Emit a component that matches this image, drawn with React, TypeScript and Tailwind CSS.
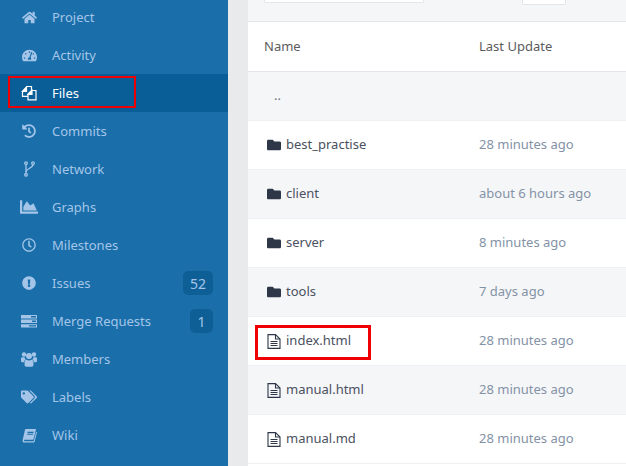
import { ReactNode } from "react";
import {
  FaHome,
  FaTachometerAlt,
  FaHistory,
  FaChartArea,
  FaRegClock,
  FaExclamationCircle,
  FaTags,
  FaFolder,
} from "react-icons/fa";

function FilesIcon() {
  return (
    <svg viewBox="0 0 16 16" className="w-[16px] h-[16px]" fill="none" stroke="currentColor" strokeWidth="1.2">
      <path d="M7 11.300H1.500V6.500L6 1.500h4.500V5" />
      <path d="M1.500 6.500H5.500V2z" fill="currentColor" />
      <path d="M7 14.900H15V5.500H10.500L7 9z" />
      <path d="M7 9.500h4V5.500z" fill="currentColor" />
    </svg>
  );
}

function ForkIcon() {
  return (
    <svg viewBox="0 0 11 16" className="w-[11px] h-[16px]" fill="none" stroke="currentColor" strokeWidth="1.300">
      <circle cx="2" cy="2.200" r="1.300" />
      <circle cx="2" cy="13.800" r="1.300" />
      <circle cx="9" cy="2.200" r="1.300" />
      <path d="M2 3.500v9" />
      <path d="M9 3.500c0 4-6.500 3.500-7 7.500" />
    </svg>
  );
}

function TasksIcon() {
  return (
    <svg viewBox="0 0 16 13" className="w-[16px] h-[13px]" fill="currentColor">
      <path d="M0 0h16v3.400H0zM10 1v1.400h5V1z" fillRule="evenodd" />
      <path d="M0 4.600h16V8H0zM11 5.600V7h4V5.600z" fillRule="evenodd" />
      <path d="M0 9.200h16v3.400H0zM8 10.200v1.400h7v-1.400z" fillRule="evenodd" />
    </svg>
  );
}

function UsersIcon() {
  return (
    <svg viewBox="0 0 16 15" className="w-[16px] h-[15px]" fill="currentColor">
      <circle cx="3" cy="2.500" r="2.200" />
      <circle cx="13" cy="2.500" r="2.200" />
      <circle cx="8" cy="4" r="3" />
      <path d="M0 6.500c0-1 .6-1.300 1.500-1.300h2c.2 1 .6 1.700 1.200 2.300-1 .4-1.500 1.300-1.600 2.700H1.200C.5 10.200 0 9.700 0 9z" />
      <path d="M16 6.500c0-1-.6-1.300-1.500-1.300h-2c-.2 1-.6 1.700-1.200 2.300 1 .4 1.500 1.300 1.600 2.700h1.900c.7 0 1.200-.5 1.200-1.200z" />
      <path d="M5.500 7.800c.7.500 1.500.8 2.500.8s1.800-.3 2.500-.8c1.200 0 1.900.9 1.900 2.500v2.800c0 1-.6 1.700-1.600 1.700H5.200c-1 0-1.600-.7-1.600-1.700v-2.800c0-1.600.7-2.500 1.900-2.500z" />
    </svg>
  );
}

function BookIcon() {
  return (
    <svg viewBox="0 0 16 16" className="w-[15px] h-[15px]" fill="currentColor">
      <path
        fillRule="evenodd"
        d="M4.200 1H15l-2.600 10.400c-.2.800-.6 1-1.400 1H3c-.8 0-1 .6-.9 1s.4.800 1 .800h8.600c.5 0 .8-.3 1-.8l2.400-9.400.9.600-2.600 10c-.2.600-.7.900-1.300.900H2.600C1.200 15.500.3 14.300.7 12.700L3.200 1.800C3.300 1.300 3.700 1 4.200 1zM6 4v1.300h6.200L12.500 4zM5.500 6v1.300h6.200L12 6z"
      />
    </svg>
  );
}

function DocIcon() {
  return (
    <svg viewBox="0 0 14 15" className="w-[14px] h-[15px]" fill="none" stroke="currentColor" strokeWidth="1.100">
      <path d="M1 .600H8.500L13 5v9.400H1z" />
      <path d="M8.500.600V5H13" />
      <path d="M3.500 7.500h7M3.500 9.500h7M3.500 11.500h7" />
    </svg>
  );
}

type NavItem = {
  label: string;
  icon: ReactNode;
  badge?: string;
  active?: boolean;
};

const navItems: NavItem[] = [
  { label: "Project", icon: <FaHome className="text-[15px]" /> },
  { label: "Activity", icon: <FaTachometerAlt className="text-[15px]" /> },
  { label: "Files", icon: <FilesIcon />, active: true },
  { label: "Commits", icon: <FaHistory className="text-[14px]" /> },
  { label: "Network", icon: <ForkIcon /> },
  { label: "Graphs", icon: <FaChartArea className="text-[18px]" /> },
  { label: "Milestones", icon: <FaRegClock className="text-[14px]" /> },
  { label: "Issues", icon: <FaExclamationCircle className="text-[14px]" />, badge: "52" },
  { label: "Merge Requests", icon: <TasksIcon />, badge: "1" },
  { label: "Members", icon: <UsersIcon /> },
  { label: "Labels", icon: <FaTags className="text-[16px]" /> },
  { label: "Wiki", icon: <BookIcon /> },
];

const rows = [
  { name: "best_practise", time: "28 minutes ago", folder: true },
  { name: "client", time: "about 6 hours ago", folder: true },
  { name: "server", time: "8 minutes ago", folder: true },
  { name: "tools", time: "7 days ago", folder: true },
  { name: "index.html", time: "28 minutes ago", folder: false, marked: true },
  { name: "manual.html", time: "28 minutes ago", folder: false },
  { name: "manual.md", time: "28 minutes ago", folder: false },
];

export default function App() {
  return (
    <div className="flex h-[466px] w-[626px] overflow-hidden bg-[#e9eaec] font-['Noto_Sans',sans-serif] text-[13px]">
      <aside className="w-[228px] shrink-0 bg-[#1a6faa] -mt-[2px] h-[468px]">
        {navItems.map((item) => (
          <div
            key={item.label}
            className={`relative flex h-[38px] items-center pl-[20px] pr-[15px] ${
              item.active ? "bg-[#0a5e98] text-white" : "text-[#a4c5e8]"
            }`}
          >
            <span className="flex w-[18px] justify-center">{item.icon}</span>
            <span className="ml-[14px] flex-1 pt-[2px]">{item.label}</span>
            {item.badge && (
              <span className="min-w-[23px] rounded-[5px] bg-[#0f5f97] px-[7px] pt-[4px] pb-[2px] text-center text-[14px] leading-[18px] text-[#a4c5e8]">
                {item.badge}
              </span>
            )}
            {item.active && (
              <div className="absolute left-[8px] top-[2px] h-[32px] w-[128px] border-2 border-[#f00000]" />
            )}
          </div>
        ))}
      </aside>

      <main className="ml-[20px] flex-1 bg-white">
        <div className="h-[22px] border-b border-[#e3e5ea] bg-[#f5f6f8] pl-[16px]">
          <div className="flex items-start">
            <div className="h-[3px] w-[160px] rounded-b-[2px] border border-t-0 border-[#e3e5ea] bg-white" />
            <div className="ml-[98px] h-[5px] w-[44px] rounded-b-[2px] border border-t-0 border-[#e3e5ea] bg-white" />
          </div>
        </div>
        <div className="flex h-[50px] items-center border-b border-[#e3e5ea] pl-[16px] text-[#5c5c5c]">
          <span className="w-[215px]">Name</span>
          <span>Last Update</span>
        </div>
        <div className="flex h-[49px] items-center border-b border-[#eef0f3] bg-[#f5f6f8] pl-[26px] text-[#6b7280]">
          ..
        </div>
        {rows.map((row, i) => (
          <div
            key={row.name}
            className={`relative flex h-[49px] items-center border-b border-[#eef0f3] pl-[19px] ${
              i % 2 === 1 ? "bg-[#f5f6f8]" : "bg-white"
            }`}
          >
            <span className="flex w-[14px] justify-center text-[#2d3748]">
              {row.folder ? <FaFolder className="text-[14px]" /> : <DocIcon />}
            </span>
            <span className="ml-[5px] w-[193px] text-[#4a5160]">{row.name}</span>
            <span className="text-[#8492a6]">{row.time}</span>
            {row.marked && (
              <div className="absolute left-[7px] top-[8px] h-[35px] w-[116px] border-[3px] border-[#f00000]" />
            )}
          </div>
        ))}
      </main>
    </div>
  );
}
